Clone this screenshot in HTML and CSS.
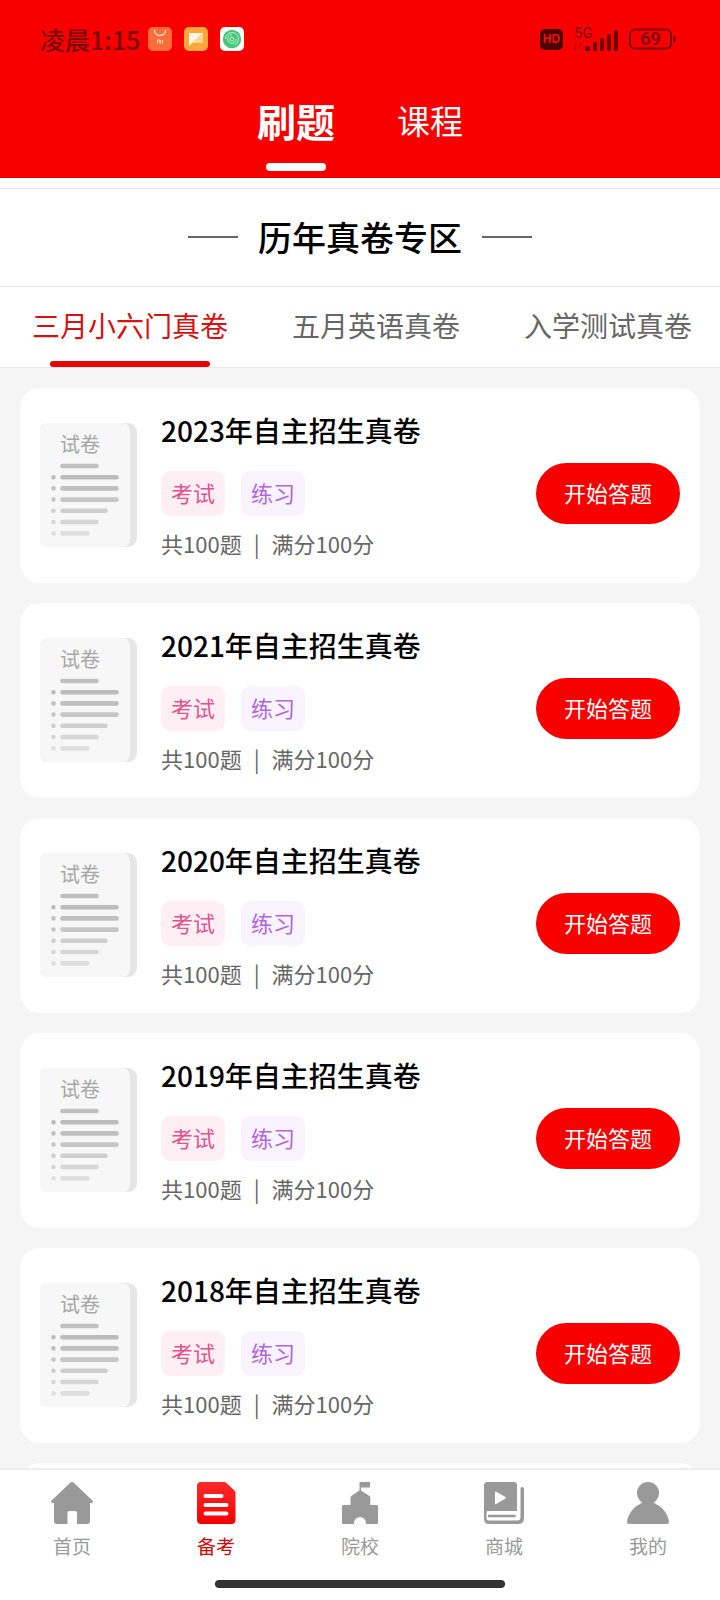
FILE: index.html
```html
<!DOCTYPE html>
<html lang="zh-CN">
<head>
<meta charset="utf-8">
<meta name="viewport" content="width=device-width, initial-scale=1">
<title>刷题</title>
<link rel="stylesheet" href="styles.css">
</head>
<body>
<svg class="defs" aria-hidden="true">
  <symbol id="paper" viewBox="0 0 97 124">
    <rect x="60" y="0" width="37" height="124" rx="9" fill="#e6e6e6"/>
    <path d="M6 0H82Q90 0 90 9V115Q90 124 82 124H6Q0 124 0 118V6Q0 0 6 0Z" fill="#f7f7f7"/>
    <g stroke-width="4.6" stroke-linecap="round">
      <path d="M22.5 43H56.5" stroke="#c0c0c0"/>
      <path d="M13.5 54.2h0M22.5 54.2H76.5" stroke="#bcbcbc"/>
      <path d="M13.5 65.4h0M22.5 65.4H76.5" stroke="#c0c0c0"/>
      <path d="M13.5 76.6h0M22.5 76.6H76.5" stroke="#c6c6c6"/>
      <path d="M13.5 87.8h0M22.5 87.8H65.5" stroke="#cecece"/>
      <path d="M13.5 99h0M22.5 99H56.5" stroke="#d6d6d6"/>
      <path d="M13.5 110.4h0M22.5 110.4H47.5" stroke="#dedede"/>
    </g>
  </symbol>
</svg>
<div class="app">
  <header class="header">
    <div class="status">
      <span class="time">凌晨1:15</span>
      <svg class="app-icon" viewBox="0 0 24 24" aria-hidden="true">
        <rect width="24" height="24" rx="5" fill="#ff6c3a"/>
        <path d="M6.500 3.500C7 10 17 10 17.500 3.500" fill="none" stroke="#ffe3d6" stroke-width="1.300" stroke-linecap="round"/>
        <path d="M9.500 16.500V13h2.500v3.500M12 13v3.500M14.500 13v3.500" fill="none" stroke="#ffe3d6" stroke-width="1"/>
      </svg>
      <svg class="app-icon" viewBox="0 0 24 24" aria-hidden="true">
        <rect width="24" height="24" rx="5" fill="#ffa63c"/>
        <path d="M5 6H19L5 19Z" fill="#fff8ea"/>
        <path d="M19 6V16H8.500Z" fill="#ffd694"/>
      </svg>
      <svg class="app-icon" viewBox="0 0 24 24" aria-hidden="true">
        <rect width="24" height="24" rx="5" fill="#fff"/>
        <circle cx="12" cy="12" r="9.200" fill="#45c877"/>
        <g fill="none" stroke="#c4f0d2" stroke-width="1">
          <path d="M5.500 12a6.500 6.500 0 1 1 9 6"/>
          <path d="M16.300 12a4.300 4.300 0 1 1-4.300-4.300"/>
          <circle cx="12" cy="12" r="2"/>
        </g>
      </svg>
      <span class="status-right">
        <span class="hd">HD</span>
        <svg class="signal" viewBox="0 0 46 30" role="img" aria-label="5G">
          <text x="1" y="14" class="signal-text">5G</text>
          <path d="M2.500 19v6l-2-2M6.500 25v-6l2 2" fill="none" stroke="#b80000" stroke-width="1.200"/>
          <g fill="#6d0000">
            <rect x="12" y="22" width="5" height="5" rx="1.500"/>
            <rect x="20" y="18" width="4" height="9" rx="1.500"/>
            <rect x="27" y="14" width="4" height="13" rx="1.500"/>
            <rect x="34" y="10" width="4" height="17" rx="1.500"/>
            <rect x="41" y="6" width="4" height="21" rx="1.500"/>
          </g>
        </svg>
        <svg class="battery" viewBox="0 0 47 22" role="img" aria-label="69">
          <rect x="1" y="1.500" width="41" height="19" rx="5" fill="none" stroke="#7d0000" stroke-width="2"/>
          <path d="M44 7.500q3 .5 3 3.500t-3 3.500Z" fill="#7d0000"/>
          <text x="21.500" y="17" class="battery-text">69</text>
        </svg>
      </span>
    </div>
    <div class="modes">
      <button class="mode mode-on" type="button">刷题</button>
      <button class="mode" type="button">课程</button>
    </div>
  </header>
  <h1 class="zone">历年真卷专区</h1>
  <div class="tabs">
    <button class="tab tab-on" type="button">三月小六门真卷</button>
    <button class="tab" type="button">五月英语真卷</button>
    <button class="tab" type="button">入学测试真卷</button>
  </div>
  <main class="list">
    <article class="card">
      <div class="paper"><svg class="paper-art" aria-hidden="true"><use href="#paper"/></svg><span class="paper-text">试卷</span></div>
      <div class="info">
        <h2 class="name">2023年自主招生真卷</h2>
        <div class="tags"><span class="tag exam">考试</span><span class="tag drill">练习</span></div>
        <p class="meta"><span>共100题</span><span>|</span><span>满分100分</span></p>
      </div>
      <button class="start" type="button">开始答题</button>
    </article>
    <article class="card">
      <div class="paper"><svg class="paper-art" aria-hidden="true"><use href="#paper"/></svg><span class="paper-text">试卷</span></div>
      <div class="info">
        <h2 class="name">2021年自主招生真卷</h2>
        <div class="tags"><span class="tag exam">考试</span><span class="tag drill">练习</span></div>
        <p class="meta"><span>共100题</span><span>|</span><span>满分100分</span></p>
      </div>
      <button class="start" type="button">开始答题</button>
    </article>
    <article class="card">
      <div class="paper"><svg class="paper-art" aria-hidden="true"><use href="#paper"/></svg><span class="paper-text">试卷</span></div>
      <div class="info">
        <h2 class="name">2020年自主招生真卷</h2>
        <div class="tags"><span class="tag exam">考试</span><span class="tag drill">练习</span></div>
        <p class="meta"><span>共100题</span><span>|</span><span>满分100分</span></p>
      </div>
      <button class="start" type="button">开始答题</button>
    </article>
    <article class="card">
      <div class="paper"><svg class="paper-art" aria-hidden="true"><use href="#paper"/></svg><span class="paper-text">试卷</span></div>
      <div class="info">
        <h2 class="name">2019年自主招生真卷</h2>
        <div class="tags"><span class="tag exam">考试</span><span class="tag drill">练习</span></div>
        <p class="meta"><span>共100题</span><span>|</span><span>满分100分</span></p>
      </div>
      <button class="start" type="button">开始答题</button>
    </article>
    <article class="card">
      <div class="paper"><svg class="paper-art" aria-hidden="true"><use href="#paper"/></svg><span class="paper-text">试卷</span></div>
      <div class="info">
        <h2 class="name">2018年自主招生真卷</h2>
        <div class="tags"><span class="tag exam">考试</span><span class="tag drill">练习</span></div>
        <p class="meta"><span>共100题</span><span>|</span><span>满分100分</span></p>
      </div>
      <button class="start" type="button">开始答题</button>
    </article>
    <article class="card"></article>
  </main>
  <footer class="bottom">
    <nav class="nav">
      <a class="nav-item" href="#home">
        <svg class="nav-icon" viewBox="0 0 42 42" aria-hidden="true">
          <path d="M19.500.6q1.500-1.200 3 0L41.500 18.500q1 2.500-1 2.500H39V39q0 3-3 3H26V31q0-2-2-2H18.500q-2 0-2 2V42H6q-3 0-3-3V21H1.500q-2 0-1-2.500Z" fill="#999"/>
        </svg>
        首页
      </a>
      <a class="nav-item nav-on" href="#exam">
        <svg class="nav-icon" viewBox="0 0 42 42" aria-hidden="true">
          <defs><linearGradient id="red" x1="0" y1="0" x2="0" y2="1"><stop offset="0" stop-color="#ff2a2a"/><stop offset="1" stop-color="#f50000"/></linearGradient></defs>
          <path d="M6 0H29q1.500 0 2.500 1L39.500 8.500q1 1 1 2.500V38q0 4-4 4H6q-4 0-4-4V4q0-4 4-4Z" fill="url(#red)"/>
          <path d="M10.500 14H26.500M10.500 23H31.500M10.500 31.500H31.500" stroke="#fff" stroke-width="4" stroke-linecap="round"/>
        </svg>
        备考
      </a>
      <a class="nav-item" href="#school">
        <svg class="nav-icon" viewBox="0 0 42 42" aria-hidden="true">
          <path d="M20.500 0H31V5.500H22V8.500L30.500 14q.8.500.8 1.500V23H37.500q1.500 0 1.500 1.500V40.500q0 1.500-1.500 1.500H27V41a6 6 0 0 0-12 0V42H4.500Q3 42 3 40.500V24.500Q3 23 4.500 23H11.500V15.500q0-1 .8-1.500L20.500 8.500Z" fill="#999"/>
        </svg>
        院校
      </a>
      <a class="nav-item" href="#mall">
        <svg class="nav-icon" viewBox="0 0 42 42" aria-hidden="true">
          <path d="M4.500 0H31q3 0 3 3V29H4.500Q3.500 29.500 3.500 31V36q0 2.500 2.500 2.500H34q3.500 0 3.500-3.500V6.500q0-1.500 1.700-1.500T41 6.500V36q0 6-6 6H6Q1 42 1 37V4Q1 0 4.500 0Z" fill="#999"/>
          <path d="M6 34H31.500" stroke="#999" stroke-width="2.600" stroke-linecap="round"/>
          <path d="M12 10.500q0-1.500 1.300-.7L22.500 15q1 .7 0 1.400L13.300 22q-1.300.7-1.300-.8Z" fill="#fff"/>
        </svg>
        商城
      </a>
      <a class="nav-item" href="#me">
        <svg class="nav-icon" viewBox="0 0 42 42" aria-hidden="true">
          <circle cx="21" cy="11" r="11" fill="#999"/>
          <path d="M16 19H26C27 22.500 32 22 37 28.500Q41.500 34 42 40q0 2-2 2H2q-2 0-2-2Q.5 34 5 28.500C10 22 15 22.500 16 19Z" fill="#999"/>
        </svg>
        我的
      </a>
    </nav>
    <div class="handle"></div>
  </footer>
</div>
</body>
</html>
```
FILE: styles.css
```css
* {
  box-sizing: border-box;
}

body {
  margin: 0;
  background: #f5f5f5;
  font-family: "Noto Sans CJK SC", "Noto Sans", sans-serif;
}

button {
  border: 0;
  padding: 0;
  background: none;
  font-family: inherit;
}

h1,
h2,
p {
  margin: 0;
}

.defs {
  position: absolute;
  width: 0;
  height: 0;
}

.app {
  display: flex;
  flex-direction: column;
  height: 100vh;
}

.header {
  flex: none;
  background: #f80000;
}

.status {
  display: flex;
  align-items: center;
  gap: 12px;
  height: 78px;
  padding: 0 44px 0 40px;
}

.time {
  margin-right: -4px;
  color: #7d0000;
  font-size: 25px;
  font-weight: 500;
  line-height: 36px;
}

.app-icon {
  width: 24px;
  height: 24px;
}

.status-right {
  display: flex;
  align-items: center;
  gap: 10px;
  margin-left: auto;
}

.hd {
  width: 23px;
  border-radius: 5px;
  background: #4d0000;
  color: #f01010;
  font: bold 12px/21px "Liberation Sans", sans-serif;
  text-align: center;
}

.signal {
  width: 46px;
  height: 30px;
}

.signal-text {
  fill: #7d0000;
  font: 15px Roboto, sans-serif;
}

.battery {
  width: 47px;
  height: 22px;
}

.battery-text {
  fill: #7d0000;
  font: 500 18px Roboto, sans-serif;
  text-anchor: middle;
}

.modes {
  display: flex;
  justify-content: center;
  gap: 62px;
  height: 100px;
}

.mode {
  display: flex;
  flex-direction: column;
  align-items: center;
  padding-top: 12px;
  color: #fff;
  font-size: 33px;
  line-height: 60px;
}

.mode-on {
  font-size: 39px;
  font-weight: 700;
}

.mode-on::after {
  content: "";
  width: 60px;
  height: 8px;
  margin-top: 13px;
  border-radius: 4px;
  background: #fff;
}

.zone {
  display: flex;
  flex: none;
  align-items: center;
  justify-content: center;
  gap: 20px;
  height: 99px;
  margin-top: 10px;
  padding-bottom: 2px;
  border: 1px solid #e6e6e6;
  border-width: 1px 0;
  background: #fff;
  box-shadow: 0 -10px #fff;
  font-size: 34px;
  font-weight: 500;
}

.zone::before,
.zone::after {
  content: "";
  width: 50px;
  height: 2px;
  background: #666;
}

.tabs {
  display: flex;
  flex: none;
  height: 81px;
  overflow: hidden;
  border-bottom: 1px solid #e6e6e6;
  background: #fff;
}

.tab {
  display: flex;
  flex: none;
  flex-direction: column;
  align-items: center;
  justify-content: space-between;
  padding: 18px 32px 0;
  color: #666;
  font-size: 28px;
  line-height: 40px;
}

.tab-on {
  color: #d81010;
}

.tab-on::after {
  content: "";
  width: 160px;
  height: 6px;
  border-radius: 3px;
  background: #e60505;
}

.list {
  display: flex;
  flex: 1;
  flex-direction: column;
  gap: 20px;
  min-height: 0;
  padding: 20px 20px 0;
  overflow-y: auto;
  scrollbar-width: none;
}

.card {
  display: flex;
  flex: none;
  align-items: center;
  min-height: 195px;
  padding: 22px 20px 24px;
  border-radius: 20px;
  background: #fff;
}

.paper {
  display: grid;
}

.paper-art,
.paper-text {
  grid-area: 1 / 1;
}

.paper-art {
  width: 97px;
  height: 124px;
}

.paper-text {
  padding: 7px 0 0 20px;
  color: #a6a6a6;
  font-size: 20px;
  line-height: 28px;
}

.info {
  flex: 1;
  padding-left: 24px;
}

.name {
  font-size: 28px;
  font-weight: 500;
  line-height: 40px;
}

.tags {
  display: flex;
  gap: 16px;
  margin: 21px 0 11px;
}

.tag {
  padding: 0 10px 2px;
  border-radius: 9px;
  font-size: 22px;
  line-height: 43px;
}

.exam {
  background: #ffeff5;
  color: #e2528c;
}

.drill {
  background: #f8f3ff;
  color: #b266dc;
}

.meta {
  display: flex;
  gap: 12px;
  color: #666;
  font-size: 22px;
  line-height: 32px;
}

.start {
  margin-top: 18px;
  padding: 0 28px 2px;
  border-radius: 31px;
  background: #f80000;
  color: #fff;
  font-size: 22px;
  line-height: 59px;
}

.bottom {
  flex: none;
  height: 132px;
  border-top: 2px solid #eee;
  background: #fff;
}

.nav {
  display: flex;
  padding-top: 12px;
}

.nav-item {
  display: flex;
  flex: 1;
  flex-direction: column;
  align-items: center;
  gap: 8px;
  color: #999;
  font-size: 19px;
  line-height: 28px;
  text-decoration: none;
}

.nav-on {
  color: #d00808;
}

.nav-icon {
  width: 42px;
  height: 42px;
}

.handle {
  width: 290px;
  height: 8px;
  margin: 20px auto 0;
  border-radius: 4px;
  background: #333;
}
```
